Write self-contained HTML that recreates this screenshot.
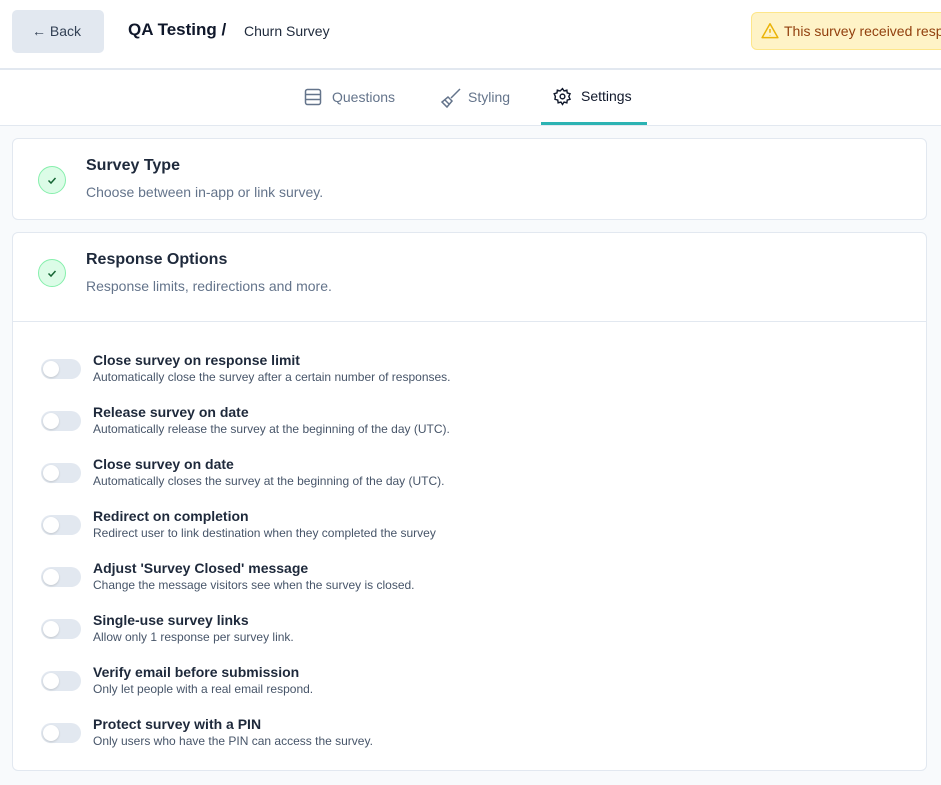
<!DOCTYPE html>
<html><head><style>
*{box-sizing:border-box;margin:0;padding:0}
body{width:941px;height:785px;background:#f8fafc;font-family:"Liberation Sans",sans-serif;color:#0f172a;position:relative;overflow:hidden}
.hdr{position:absolute;left:0;top:0;width:941px;height:70px;background:#fff;border-bottom:2px solid #e2e8f0}
.back{position:absolute;left:12px;top:10px;width:92px;height:43px;background:#e2e8f0;border-radius:5px;font-size:14px;color:#334155;line-height:43px;padding-left:20px}
.t1{position:absolute;left:128px;top:20px;font-size:17px;font-weight:bold}
.t2{position:absolute;left:244px;top:23px;font-size:14px;color:#1e293b}
.warn{position:absolute;left:751px;top:12px;width:220px;height:38px;background:#fef3c7;border:1px solid #fde68a;border-radius:6px;font-size:14px;color:#92400e;line-height:36px;padding-left:32px}
.tabs{position:absolute;left:0;top:70px;width:941px;height:56px;background:#fff;border-bottom:1px solid #e2e8f0}
.tab{position:absolute;top:19px;font-size:14px;color:#64748b}
.card{position:absolute;left:12px;width:915px;background:#fff;border:1px solid #e2e8f0;border-radius:6px}
.chk{position:absolute;left:25px;width:28px;height:28px;border-radius:50%;background:#dcfce7;border:1px solid #86efac}
.chk svg{position:absolute;left:7px;top:7px}
.ct{position:absolute;left:73px;font-size:16px;font-weight:bold;color:#1e293b}
.cd{position:absolute;left:73px;font-size:14px;color:#64748b}
.row{position:absolute;left:28px}
.tg{position:absolute;left:0;top:1px;width:40px;height:20px;border-radius:10px;background:#e2e8f0}
.tg:after{content:"";position:absolute;left:2px;top:2px;width:16px;height:16px;border-radius:50%;background:#fff;box-shadow:0 1px 2px rgba(0,0,0,.15)}
.rt{position:absolute;left:52px;top:-6px;font-size:14px;font-weight:bold;white-space:nowrap;color:#1e293b}
.rd{position:absolute;left:52px;top:12px;font-size:12px;color:#475569;white-space:nowrap}
</style></head><body>
<div class="hdr">
<div class="back">← Back</div>
<div class="t1">QA Testing /</div>
<div class="t2">Churn Survey</div>
<div class="warn"><svg style="position:absolute;left:9px;top:9px" width="18" height="17" viewBox="0 0 24 22"><path d="M12 2L1.5 20.5h21z" fill="none" stroke="#eab308" stroke-width="2" stroke-linejoin="round"/><path d="M12 9v5M12 17v.5" stroke="#eab308" stroke-width="2"/></svg>This survey received resp</div>
</div>
<div class="tabs">
<svg style="position:absolute;left:304px;top:18px" width="18" height="18" viewBox="0 0 18 18" fill="none" stroke="#64748b" stroke-width="1.5"><rect x="1.5" y="1.5" width="15" height="15" rx="2"/><path d="M1.5 6.5h15M1.5 11.5h15"/></svg>
<div class="tab" style="left:332px">Questions</div>
<svg style="position:absolute;left:440px;top:17px" width="22" height="22" viewBox="0 0 22 22" fill="none" stroke="#64748b" stroke-width="1.5"><path d="M20 2l-9 9M8 10l4 4-5 6-5-5zM5 13l4 4"/></svg>
<div class="tab" style="left:468px">Styling</div>
<svg style="position:absolute;left:553px;top:17px" width="19" height="19" viewBox="0 0 24 24" fill="none" stroke="#0f172a" stroke-width="1.8"><circle cx="12" cy="12" r="3"/><path d="M12 2l2 3 3.5-1 .5 3.5 3.5 1-1.5 3.5 1.5 3.5-3.5 1-.5 3.5-3.5-1-2 3-2-3-3.5 1-.5-3.5-3.5-1L3 12 1.5 8.5l3.5-1L5.5 4 9 5z"/></svg>
<div class="tab" style="left:581px;color:#0f172a;top:18px">Settings</div>
<div style="position:absolute;left:541px;top:52px;width:106px;height:3px;background:#2bb3b3"></div>
</div>
<div class="card" style="top:138px;height:82px">
<div class="chk" style="top:27px"><svg width="12" height="12" viewBox="0 0 12 12"><path d="M2.5 6.5l2.5 2.5 4.5-5" fill="none" stroke="#166534" stroke-width="1.5"/></svg></div>
<div class="ct" style="top:18px">Survey Type</div>
<div class="cd" style="top:45px">Choose between in-app or link survey.</div>
</div>
<div class="card" style="top:232px;height:539px">
<div class="chk" style="top:26px"><svg width="12" height="12" viewBox="0 0 12 12"><path d="M2.5 6.5l2.5 2.5 4.5-5" fill="none" stroke="#166534" stroke-width="1.5"/></svg></div>
<div class="ct" style="top:18px">Response Options</div>
<div class="cd" style="top:45px">Response limits, redirections and more.</div>
<div style="position:absolute;left:0;top:88px;width:913px;height:1px;background:#e2e8f0"></div>
<div class="row" style="top:125px"><div class="tg"></div><div class="rt">Close survey on response limit</div><div class="rd">Automatically close the survey after a certain number of responses.</div></div>
<div class="row" style="top:177px"><div class="tg"></div><div class="rt">Release survey on date</div><div class="rd">Automatically release the survey at the beginning of the day (UTC).</div></div>
<div class="row" style="top:229px"><div class="tg"></div><div class="rt">Close survey on date</div><div class="rd">Automatically closes the survey at the beginning of the day (UTC).</div></div>
<div class="row" style="top:281px"><div class="tg"></div><div class="rt">Redirect on completion</div><div class="rd">Redirect user to link destination when they completed the survey</div></div>
<div class="row" style="top:333px"><div class="tg"></div><div class="rt">Adjust 'Survey Closed' message</div><div class="rd">Change the message visitors see when the survey is closed.</div></div>
<div class="row" style="top:385px"><div class="tg"></div><div class="rt">Single-use survey links</div><div class="rd">Allow only 1 response per survey link.</div></div>
<div class="row" style="top:437px"><div class="tg"></div><div class="rt">Verify email before submission</div><div class="rd">Only let people with a real email respond.</div></div>
<div class="row" style="top:489px"><div class="tg"></div><div class="rt">Protect survey with a PIN</div><div class="rd">Only users who have the PIN can access the survey.</div></div>
</div>
</body></html>
